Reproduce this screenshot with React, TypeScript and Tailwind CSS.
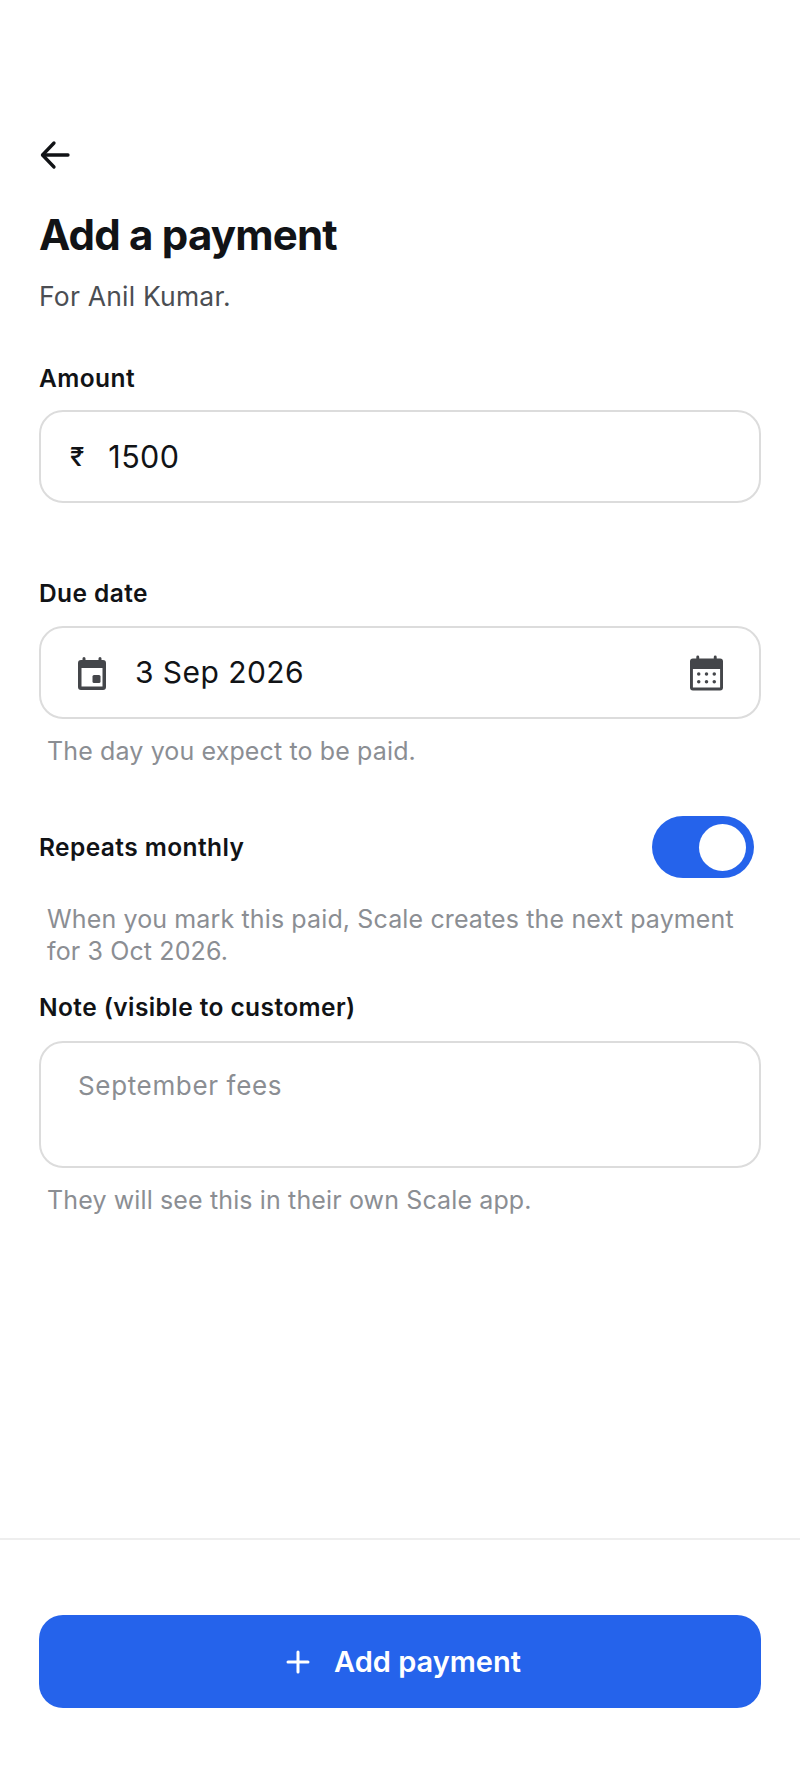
export default function App() {
  const inter = "font-['Inter',sans-serif]";
  const label = "text-[24.5px] leading-[32px] font-semibold tracking-[0.42px] text-[#111316]";
  const help = "pl-[8px] text-[25px] tracking-[0.13px] text-[#8b8e93]";
  const box = "border-2 border-[#dcdcdc] rounded-[24px] bg-white";
  return (
    <div className={`${inter} w-[800px] h-[1778px] bg-white flex flex-col`}>
      <div className="flex-1 flex flex-col pt-[139px] pl-[39px] pr-[39px]">
        <svg className="w-[32px] h-[32px] text-[#111316]" viewBox="0 0 32 32" fill="none" stroke="currentColor" strokeWidth="3.300" strokeLinecap="round" strokeLinejoin="round">
          <path d="M15 4 3.500 16 15 28" />
          <path d="M4 16h25" />
        </svg>
        <h1 className="mt-[39px] text-[42px] leading-[50px] font-bold tracking-[-0.8px] text-[#111316]">Add a payment</h1>
        <p className="mt-[18px] text-[26.5px] leading-[36px] tracking-[0.2px] text-[#4b4e53]">For Anil Kumar.</p>

        <div className={`mt-[48px] ${label}`}>Amount</div>
        <div className={`mt-[16px] h-[93px] ${box} flex items-center pl-[29px]`}>
          <span className="text-[26px] font-medium text-[#111316]">₹</span>
          <span className="ml-[24px] text-[30.5px] tracking-[0.4px] text-[#111316]">1500</span>
        </div>

        <div className={`mt-[74px] ${label}`}>Due date</div>
        <div className={`mt-[17px] h-[93px] ${box} flex items-center pl-[33px] pr-[36px]`}>
          <svg className="w-[36px] h-[36px] text-[#44464a]" viewBox="0 0 36 36" fill="currentColor">
            <path fillRule="evenodd" d="M10 2a1.500 1.500 0 0 1 1.500 1.500V5h13V3.500a1.500 1.500 0 0 1 3 0V5h1.500A3 3 0 0 1 32 8v24a3 3 0 0 1-3 3H7a3 3 0 0 1-3-3V8a3 3 0 0 1 3-3h1.500V3.500A1.500 1.500 0 0 1 10 2ZM7.500 13v18.500h21V13h-21Z" />
            <rect x="18.500" y="20" width="8" height="8" rx="1.500" />
          </svg>
          <span className="ml-[25px] text-[30px] tracking-[0.45px] text-[#111316] flex-1">3 Sep 2026</span>
          <svg className="w-[33px] h-[36px] text-[#44464a]" viewBox="0 0 34 36" fill="currentColor">
            <path fillRule="evenodd" d="M8 0a1.500 1.500 0 0 1 1.500 1.500V3h15V1.500a1.500 1.500 0 0 1 3 0V3H31a3 3 0 0 1 3 3v27a3 3 0 0 1-3 3H3a3 3 0 0 1-3-3V6a3 3 0 0 1 3-3h3.500V1.500A1.500 1.500 0 0 1 8 0ZM3 14v19h28V14H3Z" />
            <circle cx="9" cy="19" r="1.800" /><circle cx="17" cy="19" r="1.800" /><circle cx="25" cy="19" r="1.800" />
            <circle cx="9" cy="27" r="1.800" /><circle cx="17" cy="27" r="1.800" /><circle cx="25" cy="27" r="1.800" />
          </svg>
        </div>
        <p className={`mt-[16px] leading-[33px] ${help}`}>The day you expect to be paid.</p>

        <div className="mt-[48px] h-[62px] flex items-center justify-between pr-[7px]">
          <span className={label}>Repeats monthly</span>
          <div className="w-[102px] h-[62px] rounded-full bg-[#2563eb] flex items-center justify-end pr-[8px]">
            <div className="w-[47px] h-[47px] rounded-full bg-white" />
          </div>
        </div>
        <p className={`mt-[25px] leading-[32px] ${help}`}>When you mark this paid, Scale creates the next payment<br />for 3 Oct 2026.</p>

        <div className={`mt-[24px] ${label}`}>Note (visible to customer)</div>
        <div className={`mt-[18px] h-[127px] ${box} pl-[37px] pt-[26px]`}>
          <span className="text-[26px] leading-[34px] tracking-[0.65px] text-[#8b8e93]">September fees</span>
        </div>
        <p className={`mt-[16px] leading-[33px] ${help}`}>They will see this in their own Scale app.</p>
      </div>

      <div className="border-t-2 border-[#eeeeee] pt-[75px] pb-[70px] pl-[39px] pr-[39px]">
        <div className="h-[93px] rounded-[24px] bg-[#2563eb] flex items-center justify-center pl-[7px] text-white">
          <svg className="w-[24px] h-[24px]" viewBox="0 0 24 24" fill="none" stroke="currentColor" strokeWidth="3" strokeLinecap="round">
            <path d="M12 2v20M2 12h20" />
          </svg>
          <span className="ml-[24px] text-[29px] font-semibold">Add payment</span>
        </div>
      </div>
    </div>
  );
}
